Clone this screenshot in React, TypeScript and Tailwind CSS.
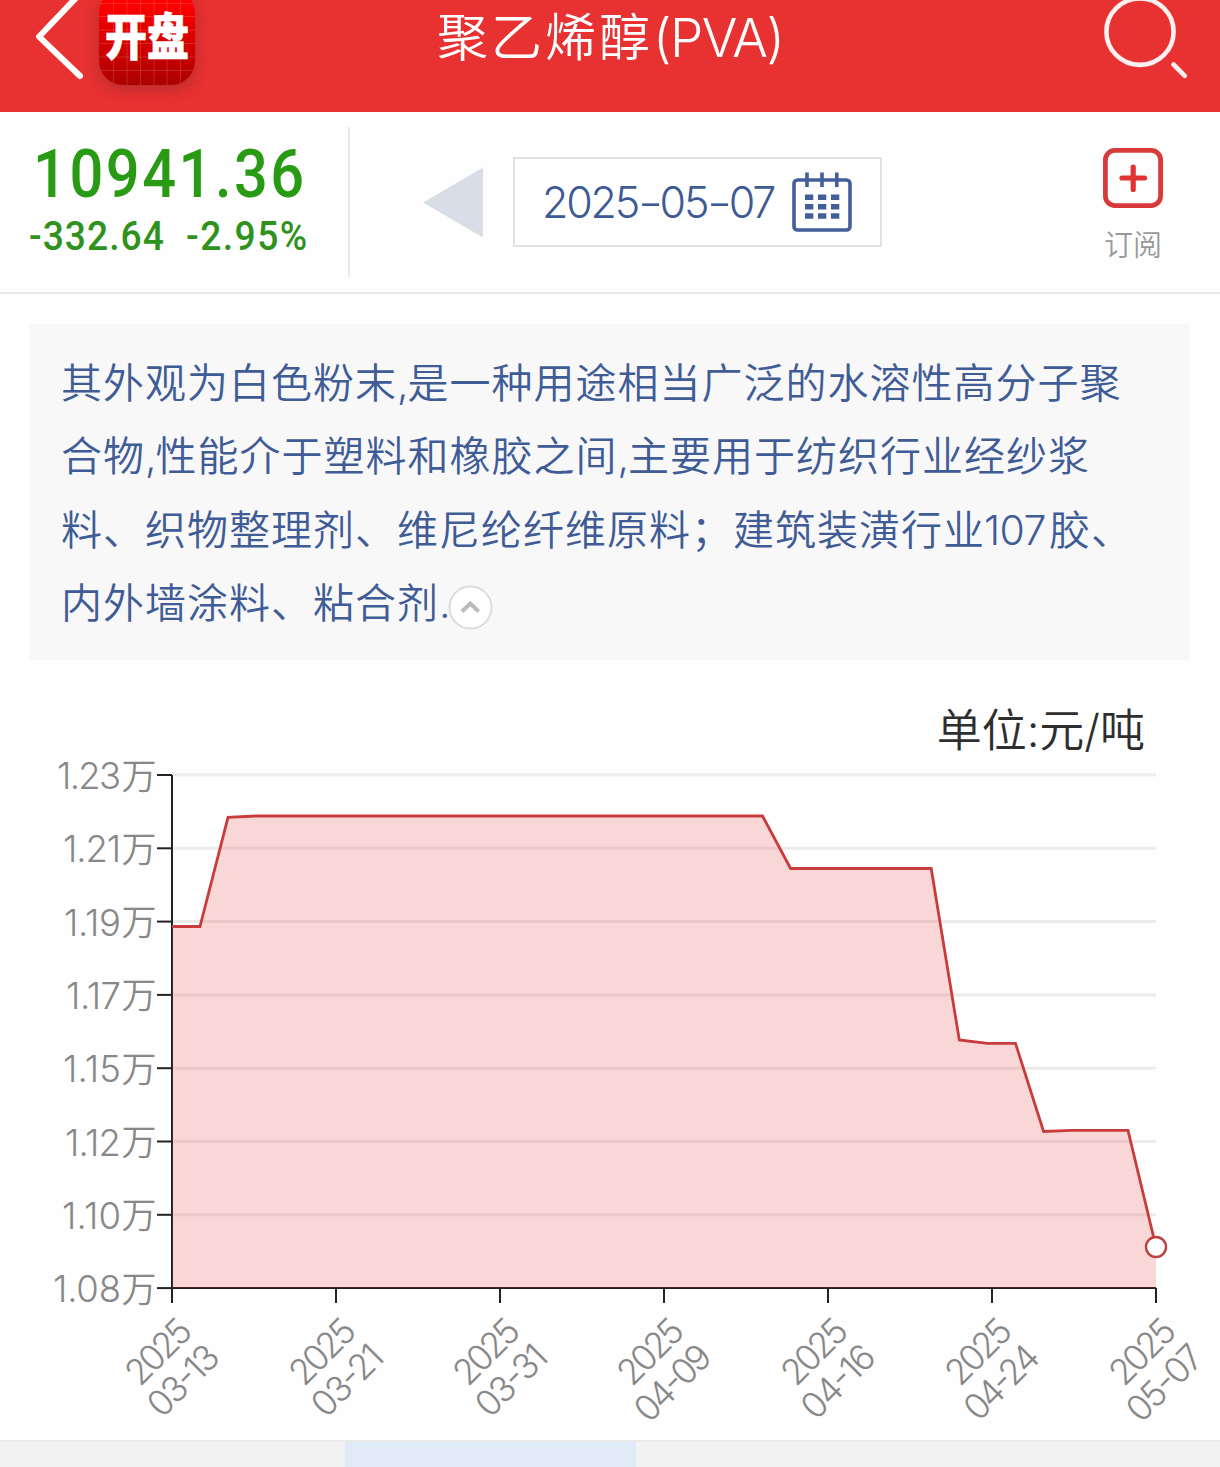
const FONT = "font-['Inter','Noto_Sans_CJK_SC',sans-serif]";

const yTicks = [
  { label: '1.23', start: 59 },
  { label: '1.21', start: 65 },
  { label: '1.19', start: 66 },
  { label: '1.17', start: 68 },
  { label: '1.15', start: 65 },
  { label: '1.12', start: 67 },
  { label: '1.10', start: 64 },
  { label: '1.08', start: 55 },
];

const xTicks = [
  { day: '03-13', length: 85 },
  { day: '03-21', length: 85 },
  { day: '03-31', length: 85 },
  { day: '04-09', length: 92 },
  { day: '04-16', length: 88 },
  { day: '04-24', length: 90 },
  { day: '05-07', length: 92 },
];

const LINE =
  '172,926.5 200,926.5 228,817.3 256,816 762.5,816 790.6,868.5 931.2,868.5 959.3,1040 987.4,1043.3 1015.5,1043.3 1043.6,1131.5 1071.7,1130.4 1128,1130.4 1156,1247';

function Header() {
  return (
    <header className="relative flex h-28 items-start justify-between overflow-hidden bg-[#e83131]">
      <div className="flex">
        <svg width="99" height="112" viewBox="0 0 99 112" fill="none">
          <path d="M83 -9.5 39 36.7 80 76" stroke="#fff" strokeWidth="6" strokeLinecap="round" strokeLinejoin="round" />
        </svg>
        <div className="relative -mt-[11px] flex size-24 items-center justify-center rounded-[24px] bg-linear-to-b from-[#ff0000] from-15% to-[#ac0000] shadow-[0_4px_14px_rgba(90,40,40,0.35)]">
          <svg className="absolute inset-0 rounded-[24px]" width="96" height="96" stroke="#fff" strokeOpacity="0.14" strokeWidth="1">
            <path d="M14.5 0V96M28 0V96M41.5 0V96M55 0V96M68 0V96M81.5 0V96M0 14.5H96M0 27.5H96M0 41H96M0 54.5H96M0 68H96M0 81.5H96" />
          </svg>
          <span className="relative -top-[3px] block scale-y-[1.18] font-['Noto_Sans_CJK_SC',sans-serif] text-[42px] leading-[50px] font-black whitespace-nowrap text-white [-webkit-text-stroke:0.6px_white]">
            开盘
          </span>
        </div>
      </div>
      <h1 className={`${FONT} absolute top-0 left-[437px] flex items-center text-[51px] leading-[76px] font-[350] whitespace-nowrap text-white`}>
        <span className="tracking-[3px]">聚乙烯醇</span>
        <span className="text-[53px] tracking-[-1.5px]">(PVA)</span>
      </h1>
      <svg width="130" height="112" viewBox="1090 0 130 112" fill="none" stroke="#fff" strokeOpacity="0.93">
        <ellipse cx="1140" cy="31.7" rx="33.6" ry="33.2" strokeWidth="4.6" />
        <path d="m1173.5 64.5 11.3 11.3" strokeWidth="4.6" strokeLinecap="round" />
      </svg>
    </header>
  );
}

function Hyphen() {
  return <span className="inline-block w-[21.5px] origin-left scale-x-[1.3]">-</span>;
}

function QuoteBar() {
  return (
    <section className="flex h-[182px] border-b-2 border-[#e9e9e9]">
      <div className="mt-[15px] h-[150px] w-[350px] border-r-2 border-[#e9e9e9] font-['Roboto',sans-serif] font-medium whitespace-nowrap text-[#299a14]">
        <div className="mt-[13px] ml-[33px] origin-left scale-x-[0.89] text-[67px] leading-[68px] tracking-[2.8px]">10941.36</div>
        <div className="ml-[29px] flex pt-px text-[40px] leading-[56px] text-[#2f921c]">
          <span className="w-[157px] origin-left scale-x-[0.93] tracking-[1.1px]">-332.64</span>
          <span className="origin-left scale-x-[0.93] tracking-[1.6px]">-2.95%</span>
        </div>
      </div>
      <svg className="mt-[55px] ml-[73px]" width="60" height="72" viewBox="0 0 60 72">
        <path d="M0 35.5 60 .5V70.5Z" fill="#d9dee6" />
      </svg>
      <div className="mt-[45px] ml-[30px] flex h-[90px] w-[369px] items-center justify-between border-2 border-[#e2e2e2] pr-7 pl-[27px]">
        <span className={`${FONT} pt-px text-[43px] font-[350] tracking-[-2.2px] whitespace-nowrap text-[#3d5a94]`}>
          2025
          <Hyphen />
          05
          <Hyphen />
          07
        </span>
        <svg className="mt-[2px]" width="60" height="62" viewBox="792 172 60 62" fill="none" stroke="#435f99" strokeWidth="3.6">
          <rect x="794" y="180" width="56" height="50" rx="3.5" />
          <path d="M807 172.5V187M822 172.5V187M836.8 172.5V187" />
          <path
            d="M805 197.3h8.3M818 197.3h8.3M831 197.3h8.3M805 206.7h8.3M818 206.7h8.3M831 206.7h8.3M805 216h8.3M818 216h8.3M831 216h8.3"
            strokeWidth="5.6"
          />
        </svg>
      </div>
      <button className="mt-9 ml-[211px] flex h-32 w-20 flex-col items-center">
        <svg width="60" height="60" viewBox="0 0 60 60" fill="none" stroke="#d83a3a">
          <rect x="2.4" y="2.4" width="55.2" height="55.2" rx="9.5" strokeWidth="4.8" />
          <path d="M19 30H41.5M30.2 19V41.5" stroke="#e03434" strokeWidth="5.2" strokeLinecap="round" />
        </svg>
        <span className={`${FONT} mt-[18px] text-[29px] leading-10 font-[350] text-[#999]`}>订阅</span>
      </button>
    </section>
  );
}

function Description() {
  return (
    <section
      className={`${FONT} mx-[30px] mt-[30px] h-[336px] bg-[#f8f8f8] pt-[23px] pl-[31px] text-[41px] leading-[73.4px] font-[350] tracking-[1px] whitespace-nowrap text-[#3f5c96]`}
    >
      <p>其外观为白色粉末<Comma />是一种用途相当广泛的水溶性高分子聚</p>
      <p>合物<Comma />性能介于塑料和橡胶之间<Comma />主要用于纺织行业经纱浆</p>
      <p>
        料、织物整理剂、维尼纶纤维原料；建筑装潢行业<span className="mr-px -ml-px inline-block w-[64px] tracking-[-0.6px]">107</span>胶、
      </p>
      <div className="flex">
        <p>内外墙涂料、粘合剂.</p>
        <svg className="mt-[17px] -ml-[4px]" width="46" height="46" viewBox="0 0 46 46" fill="none">
          <circle cx="22.5" cy="23.5" r="21" fill="#fff" stroke="#dcdcdc" strokeWidth="2" />
          <path d="m14 27.5 8.3-8 8.3 8" stroke="#bbb" strokeWidth="4" />
        </svg>
      </div>
    </section>
  );
}

function Comma() {
  return <span className="inline-block w-[10.5px]">,</span>;
}

function Chart() {
  return (
    <svg className={`${FONT} block`} width="1220" height="685" viewBox="0 755 1220 685" fill="#888" fontWeight="350">
      {yTicks.map((t, i) => {
        const y = 775 + i * 73.3;
        return (
          <g key={t.label}>
            {i < 7 && <path d={`M173 ${y}H1156`} stroke="#ececec" strokeWidth="3" />}
            <path d={`M157 ${y}H172`} stroke="#222" strokeWidth="2" />
            <text x={t.start - 2} y={y + 14} fontSize="36.5" textLength={123 - t.start}>
              {t.label}
            </text>
            <text x="121.5" y={y + 13.5} fontSize="35">
              万
            </text>
          </g>
        );
      })}
      <path d="M172 775V1289M171 1288H1156" stroke="#222" strokeWidth="2" />
      <polygon points={`172,1288 ${LINE} 1156,1288`} fill="#e63232" fillOpacity="0.19" />
      <polyline points={LINE} fill="none" stroke="#c83c3c" strokeWidth="2.8" />
      <circle cx="1156" cy="1247" r="10" fill="#fff" stroke="#bf4040" strokeWidth="2.4" />
      {xTicks.map((t, i) => (
        <g key={t.day} transform={`translate(${172 + i * 164} 1288)`}>
          <path d="M0 0V15" stroke="#222" strokeWidth="2" />
          <g transform="translate(22.5 45) rotate(-45)" fontSize="35.5">
            <text x="-77" y="0" textLength="77">
              2025
            </text>
            <text x={1 - t.length} y="38" textLength={t.length}>
              {t.day}
            </text>
          </g>
        </g>
      ))}
    </svg>
  );
}

export default function App() {
  return (
    <main className="flex h-[1467px] w-[1220px] flex-col overflow-hidden bg-[#fefefe]">
      <Header />
      <QuoteBar />
      <Description />
      <div className={`${FONT} flex h-[95px] items-center justify-end pt-[45px] pr-[75px] text-[45px] leading-none font-[350] whitespace-nowrap text-[#2e2e2e]`}>
        <span>单位:元/吨</span>
      </div>
      <Chart />
      <div className="flex h-[27px] border-t-2 border-[#e9e9e9] bg-[#f2f2f2] pl-[345px]">
        <div className="w-[291px] bg-[#e0ebf7]" />
      </div>
    </main>
  );
}
